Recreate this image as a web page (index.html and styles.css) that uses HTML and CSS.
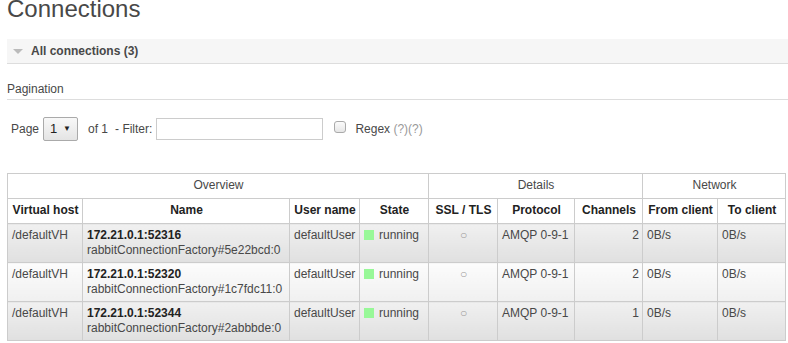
FILE: index.html
```html
<!DOCTYPE html>
<html lang="en">
<head>
    <meta charset="UTF-8">
    <title>Connections</title>
    <link rel="stylesheet" href="styles.css">
</head>
<body>
    <h1>Connections</h1>
    <div class="section">
        <h2 class="section-title"><span class="arrow"></span>All connections (3)</h2>
        <div class="pagination">
            <div class="pagination-label">Pagination</div>
            <div class="pagination-row">
                <span>Page</span>
                <span class="select">1 <span class="caret">&#9660;</span></span>
                <span>of 1</span>
                <span class="filter-label">- Filter:</span>
                <span class="filter"></span>
                <span class="checkbox"></span>
                <span>Regex <span class="help">(?)(?)</span></span>
            </div>
        </div>
        <table class="list">
            <colgroup>
                <col class="c-vhost"><col class="c-name"><col class="c-user"><col class="c-state">
                <col class="c-ssl"><col class="c-proto"><col class="c-chan">
                <col class="c-from"><col class="c-to">
            </colgroup>
            <thead>
                <tr class="group">
                    <th colspan="4">Overview</th>
                    <th colspan="3">Details</th>
                    <th colspan="2">Network</th>
                </tr>
                <tr>
                    <th>Virtual host</th>
                    <th>Name</th>
                    <th>User name</th>
                    <th>State</th>
                    <th>SSL / TLS</th>
                    <th>Protocol</th>
                    <th>Channels</th>
                    <th>From client</th>
                    <th>To client</th>
                </tr>
            </thead>
            <tbody>
                <tr class="alt1">
                    <td>/defaultVH</td>
                    <td><b>172.21.0.1:52316</b><br>rabbitConnectionFactory#5e22bcd:0</td>
                    <td>defaultUser</td>
                    <td><span class="status"></span>running</td>
                    <td class="c">&#9675;</td>
                    <td>AMQP 0-9-1</td>
                    <td class="r">2</td>
                    <td>0B/s</td>
                    <td>0B/s</td>
                </tr>
                <tr class="alt2">
                    <td>/defaultVH</td>
                    <td><b>172.21.0.1:52320</b><br>rabbitConnectionFactory#1c7fdc11:0</td>
                    <td>defaultUser</td>
                    <td><span class="status"></span>running</td>
                    <td class="c">&#9675;</td>
                    <td>AMQP 0-9-1</td>
                    <td class="r">2</td>
                    <td>0B/s</td>
                    <td>0B/s</td>
                </tr>
                <tr class="alt1">
                    <td>/defaultVH</td>
                    <td><b>172.21.0.1:52344</b><br>rabbitConnectionFactory#2abbbde:0</td>
                    <td>defaultUser</td>
                    <td><span class="status"></span>running</td>
                    <td class="c">&#9675;</td>
                    <td>AMQP 0-9-1</td>
                    <td class="r">1</td>
                    <td>0B/s</td>
                    <td>0B/s</td>
                </tr>
            </tbody>
        </table>
    </div>
</body>
</html>
```
FILE: styles.css
```css
body {
    margin: 0;
    padding: 0 0 0 7px;
    font-family: 'Liberation Sans', Arial, sans-serif;
    font-size: 12px;
    color: #484848;
    background: #fff;
}

h1 {
    margin: -5px 0 0;
    font-size: 24px;
    font-weight: normal;
    line-height: 28px;
    color: #484848;
}

.section-title {
    margin: 16px 0 0;
    height: 24px;
    line-height: 24px;
    background: #f6f6f6;
    border-bottom: 1px solid #ddd;
    font-size: 12px;
    font-weight: bold;
    color: #484848;
    display: flex;
    align-items: center;
}

.arrow {
    width: 0;
    height: 0;
    margin: 0 8px 0 6px;
    border-left: 5px solid transparent;
    border-right: 5px solid transparent;
    border-top: 5px solid #bbb;
}

.pagination-label {
    margin-top: 18px;
    padding-bottom: 3px;
    line-height: 14px;
    border-bottom: 1px solid #ddd;
}

.pagination-row {
    display: flex;
    align-items: center;
    gap: 4px;
    margin-top: 17px;
    padding-left: 4px;
    height: 24px;
}

.select {
    box-sizing: border-box;
    width: 35px;
    height: 24px;
    margin-right: 6px;
    border: 1px solid #aaa;
    border-radius: 2px;
    background: linear-gradient(#f8f8f8, #e4e4e4);
    color: #222;
    font-size: 13px;
    line-height: 22px;
    padding-left: 6px;
}

.caret {
    font-size: 8px;
    vertical-align: 2px;
    margin-left: 2px;
}

.filter-label {
    margin-left: 3px;
}

.filter {
    box-sizing: border-box;
    width: 167px;
    height: 22px;
    border: 1px solid #ccc;
    background: #fff;
    margin-right: 7px;
}

.checkbox {
    box-sizing: border-box;
    width: 12px;
    height: 12px;
    border: 1px solid #aaa;
    border-radius: 3px;
    background: linear-gradient(#fbfbfb, #e6e6e6);
    margin: -5px 5px 0 0;
}

.help {
    color: #999;
}

table.list {
    margin-top: 32px;
    width: 778px;
    table-layout: fixed;
    border-collapse: collapse;
}

.c-vhost { width: 75px; }
.c-name { width: 207px; }
.c-user { width: 70px; }
.c-state { width: 69px; }
.c-ssl { width: 69px; }
.c-proto { width: 77px; }
.c-chan { width: 68px; }
.c-from { width: 75px; }
.c-to { width: 68px; }

table.list th, table.list td {
    border: 1px solid #ccc;
    padding: 4px 3px 5px 4px;
    line-height: 15px;
    vertical-align: top;
    white-space: nowrap;
    overflow: hidden;
}

table.list th {
    text-align: center;
    font-weight: bold;
    color: #222;
    background: #fff;
}

table.list tr.group th {
    font-weight: normal;
    color: #484848;
}

table.list td {
    text-align: left;
    height: 29px;
    padding-bottom: 4px;
}

table.list td b {
    color: #222;
}

tr.alt1 td {
    background: linear-gradient(#f0f0f0, #e0e0e0);
}

tr.alt2 td {
    background: linear-gradient(#fcfcfc, #f0f0f0);
}

td.c {
    text-align: center !important;
    color: #999;
    font-size: 12px;
}

td.r {
    text-align: right !important;
}

.status {
    display: inline-block;
    width: 10px;
    height: 10px;
    background: #98f898;
    margin: 0 5px -1px 0;
}
```
